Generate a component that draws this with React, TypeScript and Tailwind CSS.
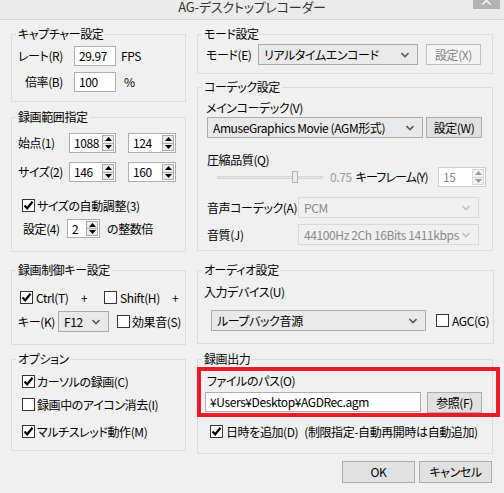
import React from "react";

const FONT = "font-['Noto_Sans_CJK_JP',sans-serif] [font-feature-settings:'palt']";

function Group({ title, className = "", children }: { title: string; className?: string; children?: React.ReactNode }) {
  return (
    <fieldset className={`border border-[#dcdcdc] px-[4px] ${className}`}>
      <legend className="px-[2px] leading-[16px]">{title}</legend>
      {children}
    </fieldset>
  );
}

function Check({ checked = false, className = "" }: { checked?: boolean; className?: string }) {
  return (
    <div className={`flex h-[13px] w-[13px] shrink-0 items-center justify-center border border-[#333333] bg-white ${className}`}>
      {checked && (
        <svg width="11" height="11" viewBox="0 0 11 11">
          <path d="M1.5 5.5 L4.2 8.3 L9.5 1.8" stroke="#000" strokeWidth="2.2" fill="none" />
        </svg>
      )}
    </div>
  );
}

function Chevron({ color = "#555555" }: { color?: string }) {
  return (
    <svg width="8" height="6" viewBox="0 0 8 6" className="shrink-0">
      <path d="M0.5 1 L4 4.5 L7.5 1" stroke={color} strokeWidth="1.6" fill="none" />
    </svg>
  );
}

function Combo({ value, className = "", disabled = false }: { value: string; className?: string; disabled?: boolean }) {
  return (
    <div
      className={`flex h-[21px] items-center border pl-[5px] pr-[8px] ${
        disabled ? "border-[#d9d9d9] bg-[#f0f0f0] text-[#8a8a8a]" : "border-[#acacac] bg-[#e9e9e9]"
      } ${className}`}
    >
      <span className="flex-1 overflow-hidden leading-[16px]">{value}</span>
      <Chevron color={disabled ? "#c4c4c4" : "#5a5a5a"} />
    </div>
  );
}

function TextBox({ value, className = "" }: { value: string; className?: string }) {
  return (
    <div className={`flex h-[20px] items-center border border-[#abadb3] bg-white pl-[4px] ${className}`}>
      <span className="leading-[16px]">{value}</span>
    </div>
  );
}

function Arrow({ up, color }: { up: boolean; color: string }) {
  return (
    <svg width="7" height="4" viewBox="0 0 7 4">
      <path d={up ? "M0 4 L3.5 0 L7 4 Z" : "M0 0 L3.5 4 L7 0 Z"} fill={color} />
    </svg>
  );
}

function Spin({ value, className = "", disabled = false, h = "h-[20px]" }: { value: string; className?: string; disabled?: boolean; h?: string }) {
  const c = disabled ? "#9a9a9a" : "#000";
  return (
    <div className={`flex ${h} shrink-0 border ${disabled ? "border-[#cfcfcf] text-[#8a8a8a]" : "border-[#abadb3]"} bg-white ${className}`}>
      <div className="flex flex-1 items-center pl-[4px] leading-[16px]">{value}</div>
      <div className="flex w-[14px] flex-col p-[1px]">
        <div className={`flex flex-1 items-center justify-center border ${disabled ? "border-[#d8d8d8] bg-[#f4f4f4]" : "border-[#acacac] bg-[#ececec]"}`}>
          <Arrow up color={c} />
        </div>
        <div className={`flex flex-1 items-center justify-center border border-t-0 ${disabled ? "border-[#d8d8d8] bg-[#f4f4f4]" : "border-[#acacac] bg-[#ececec]"}`}>
          <Arrow up={false} color={c} />
        </div>
      </div>
    </div>
  );
}

function Button({ label, className = "", disabled = false }: { label: string; className?: string; disabled?: boolean }) {
  return (
    <div
      className={`flex items-center justify-center border leading-[16px] ${
        disabled ? "border-[#bfbfbf] bg-[#f4f4f4] text-[#838383]" : "border-[#adadad] bg-[#e1e1e1]"
      } ${className}`}
    >
      {label}
    </div>
  );
}

export default function App() {
  return (
    <div className={`relative h-[493px] w-[504px] overflow-hidden whitespace-nowrap bg-[#f0f0f0] text-[12px] tracking-[-0.4px] text-black ${FONT}`}>
      {/* title bar */}
      <div className="relative flex h-[20px] items-start justify-center border-b border-[#d6d6d6] bg-[#ebebeb]">
        <span className="text-[13px] leading-[14px] tracking-[-0.2px] text-[#333333]">AG-デスクトップレコーダー</span>
        <div className="absolute right-[4px] top-0 flex h-[9px] w-[27px] justify-center bg-[#b3b3b3]">
          <svg width="9" height="5" viewBox="0 0 9 5">
            <path d="M0.5 4.5 L4.5 0.5 L8.5 4.5" stroke="#fff" strokeWidth="1.4" fill="none" />
          </svg>
        </div>
      </div>

      <div className="flex gap-[11px] pl-[11px] pt-[6px]">
        {/* left column */}
        <div className="flex w-[175px] flex-col">
          <Group title="キャプチャー設定" className="h-[76px]">
            <div className="mt-[4px] flex items-center">
              <div className="w-[47px] text-right">レート(R)</div>
              <TextBox value="29.97" className="ml-[11px] w-[42px]" />
              <span className="ml-[5px]">FPS</span>
            </div>
            <div className="mt-[6px] flex items-center">
              <div className="w-[47px] text-right">倍率(B)</div>
              <TextBox value="100" className="ml-[11px] w-[42px]" />
              <span className="ml-[8px]">%</span>
            </div>
          </Group>

          <Group title="録画範囲指定" className="mt-[7px] h-[143px]">
            <div className="mt-[8px] flex items-center">
              <div className="w-[53px] pl-[2px]">始点(1)</div>
              <Spin value="1088" className="w-[47px]" />
              <Spin value="124" className="ml-[12px] w-[48px]" />
            </div>
            <div className="mt-[9px] flex items-center">
              <div className="w-[53px] pl-[2px]">サイズ(2)</div>
              <Spin value="146" className="w-[47px]" />
              <Spin value="160" className="ml-[12px] w-[48px]" />
            </div>
            <div className="mt-[17px] flex h-[13px] items-center">
              <Check checked className="ml-[6px]" />
              <span className="ml-[2px] leading-[16px]">サイズの自動調整(3)</span>
            </div>
            <div className="mt-[7px] flex items-center">
              <div className="ml-[7px] w-[44px]">設定(4)</div>
              <Spin value="2" className="w-[33px]" h="h-[19px]" />
              <span className="ml-[7px]">の整数倍</span>
            </div>
          </Group>

          <Group title="録画制御キー設定" className="mt-[10px] h-[83px]">
            <div className="mt-[13px] flex h-[13px] items-center">
              <div className="ml-[4px] flex w-[61px] items-center">
                <Check checked />
                <span className="ml-[3px] leading-[16px]">Ctrl(T)</span>
              </div>
              <span className="w-[23px] leading-[16px]">+</span>
              <div className="flex w-[68px] items-center">
                <Check />
                <span className="ml-[3px] leading-[16px]">Shift(H)</span>
              </div>
              <span className="leading-[16px]">+</span>
            </div>
            <div className="mt-[7px] flex items-center">
              <div className="ml-[2px] w-[40px]">キー(K)</div>
              <Combo value="F12" className="w-[51px] pr-[6px]" />
              <Check className="ml-[8px]" />
              <span className="ml-[2px]">効果音(S)</span>
            </div>
          </Group>

          <Group title="オプション" className="mt-[6px] h-[100px]">
            <div className="mt-[8px] flex h-[13px] items-center">
              <Check checked className="ml-[6px]" />
              <span className="ml-[2px] leading-[16px]">カーソルの録画(C)</span>
            </div>
            <div className="mt-[10px] flex h-[13px] items-center">
              <Check className="ml-[6px]" />
              <span className="ml-[2px] leading-[16px]">録画中のアイコン消去(I)</span>
            </div>
            <div className="mt-[14px] flex h-[13px] items-center">
              <Check checked className="ml-[6px]" />
              <span className="ml-[2px] leading-[16px]">マルチスレッド動作(M)</span>
            </div>
          </Group>
        </div>

        {/* right column */}
        <div className="flex w-[296px] flex-col">
          <Group title="モード設定" className="h-[48px]">
            <div className="mt-[2px] flex items-center">
              <div className="ml-[4px] w-[52px]">モード(E)</div>
              <Combo value="リアルタイムエンコード" className="w-[160px]" />
              <Button label="設定(X)" disabled className="ml-[8px] h-[21px] w-[55px]" />
            </div>
          </Group>

          <Group title="コーデック設定" className="mt-[5px] h-[172px]">
            <div className="ml-[4px] mt-[5px] leading-[16px]">メインコーデック(V)</div>
            <div className="mt-[1px] flex items-center">
              <Combo value="AmuseGraphics Movie (AGM形式)" className="ml-[5px] w-[216px]" />
              <Button label="設定(W)" className="ml-[3px] h-[21px] w-[56px]" />
            </div>
            <div className="ml-[5px] mt-[14px] leading-[15px]">圧縮品質(Q)</div>
            <div className="flex h-[20px] items-center">
              <div className="relative ml-[15px] h-[3px] w-[106px] shrink-0 border border-[#d6d6d6] bg-[#e7e7e7]">
                <div className="absolute -top-[6px] left-[74px] h-[12px] w-[6px] border border-[#b4b4b4] bg-[#ececec]" />
              </div>
              <span className="ml-[7px] text-[#9a9a9a]">0.75</span>
              <span className="ml-[4px] tracking-[-0.9px]">キーフレーム(Y)</span>
              <Spin value="15" disabled className="ml-auto mr-[2px] w-[48px]" />
            </div>
            <div className="mt-[10px] flex items-center">
              <div className="ml-[5px] w-[91px]">音声コーデック(A)</div>
              <Combo value="PCM" disabled className="h-[20px] w-[181px]" />
            </div>
            <div className="mt-[6px] flex items-center">
              <div className="ml-[5px] w-[91px]">音質(J)</div>
              <Combo value="44100Hz 2Ch 16Bits 1411kbps" disabled className="h-[20px] w-[181px]" />
            </div>
          </Group>

          <Group title="オーディオ設定" className="mt-[11px] h-[82px]">
            <div className="ml-[2px] mt-[6px] leading-[16px]">入力デバイス(U)</div>
            <div className="mt-[10px] flex items-center">
              <Combo value="ループバック音源" className="ml-[9px] h-[20px] w-[215px]" />
              <Check className="ml-[10px]" />
              <span className="ml-[3px]">AGC(G)</span>
            </div>
          </Group>

          <div className="relative mt-[7px]">
            <Group title="録画出力" className="h-[103px]">
              <div className="ml-[5px] mt-[6px] leading-[16px]">ファイルのパス(O)</div>
              <div className="mt-[3px] flex items-start">
                <TextBox value="¥Users¥Desktop¥AGDRec.agm" className="ml-[3px] w-[216px]" />
                <Button label="参照(F)" className="ml-[6px] h-[21px] w-[55px]" />
              </div>
              <div className="mt-[12px] flex h-[13px] items-center">
                <Check checked className="ml-[8px]" />
                <span className="ml-[3px] leading-[16px]">日時を追加(D)</span>
                <span className="ml-[6px] leading-[16px]">(制限指定-自動再開時は自動追加)</span>
              </div>
            </Group>
            <div className="pointer-events-none absolute left-0 top-[16px] h-[50px] w-[303px] border-[4px] border-[#ed1c24]" />
          </div>

          <div className="mr-[1px] mt-[7px] flex justify-end gap-[4px]">
            <Button label="OK" className="h-[22px] w-[73px]" />
            <Button label="キャンセル" className="h-[22px] w-[73px]" />
          </div>
        </div>
      </div>
    </div>
  );
}
